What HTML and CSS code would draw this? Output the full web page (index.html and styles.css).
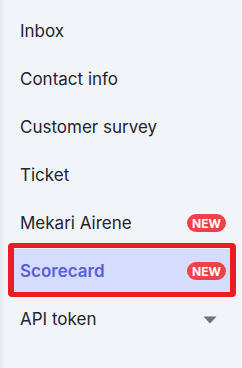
FILE: index.html
```html
<!DOCTYPE html>
<html>
<head>
<meta charset="utf-8">
<link rel="stylesheet" href="styles.css">
</head>
<body>
<nav class="menu">
  <a class="item">Inbox</a>
  <a class="item">Contact info</a>
  <a class="item">Customer survey</a>
  <a class="item">Ticket</a>
  <a class="item">Mekari Airene <span class="badge">NEW</span></a>
  <a class="item active">Scorecard <span class="badge">NEW</span></a>
  <a class="item">API token
    <svg class="caret" width="14" height="8" viewBox="0 0 14 8"><path d="M0.5 0.5h13L7 7.5z" fill="#6b7280"/></svg>
  </a>
</nav>
</body>
</html>
```

FILE: styles.css
```css
html, body {
  margin: 0;
  padding: 0;
}
body {
  width: 242px;
  height: 368px;
  background: linear-gradient(to right, #e4e7ec 0, #eceff4 3px, #f1f4f9 6px);
  font-family: Inter, "Noto Sans", sans-serif;
  overflow: hidden;
}
.menu {
  display: flex;
  flex-direction: column;
  gap: 4px;
  padding: 9px 6px 0 8px;
}
.item {
  position: relative;
  display: flex;
  align-items: center;
  justify-content: space-between;
  height: 44px;
  padding: 0 10px 0 12px;
  font-size: 17px;
  color: #1f2430;
  border-radius: 4px;
}
.item.active {
  background: #d5dcfd;
  color: #5a61d8;
  font-weight: 600;
}
.item.active::after {
  content: "";
  position: absolute;
  top: -6px;
  bottom: -4px;
  left: 0;
  right: 0;
  border: 6px solid #ec1c24;
  border-top-width: 5px;
  border-bottom-width: 5px;
  border-radius: 4px;
}
.badge {
  display: inline-flex;
  align-items: center;
  justify-content: center;
  width: 39px;
  height: 18px;
  border-radius: 9px;
  background: #ee4248;
  color: #fff;
  font-size: 12px;
  font-weight: 700;
  letter-spacing: 0.1px;
}
.caret {
  margin-right: 9px;
  margin-top: 2px;
}
```
